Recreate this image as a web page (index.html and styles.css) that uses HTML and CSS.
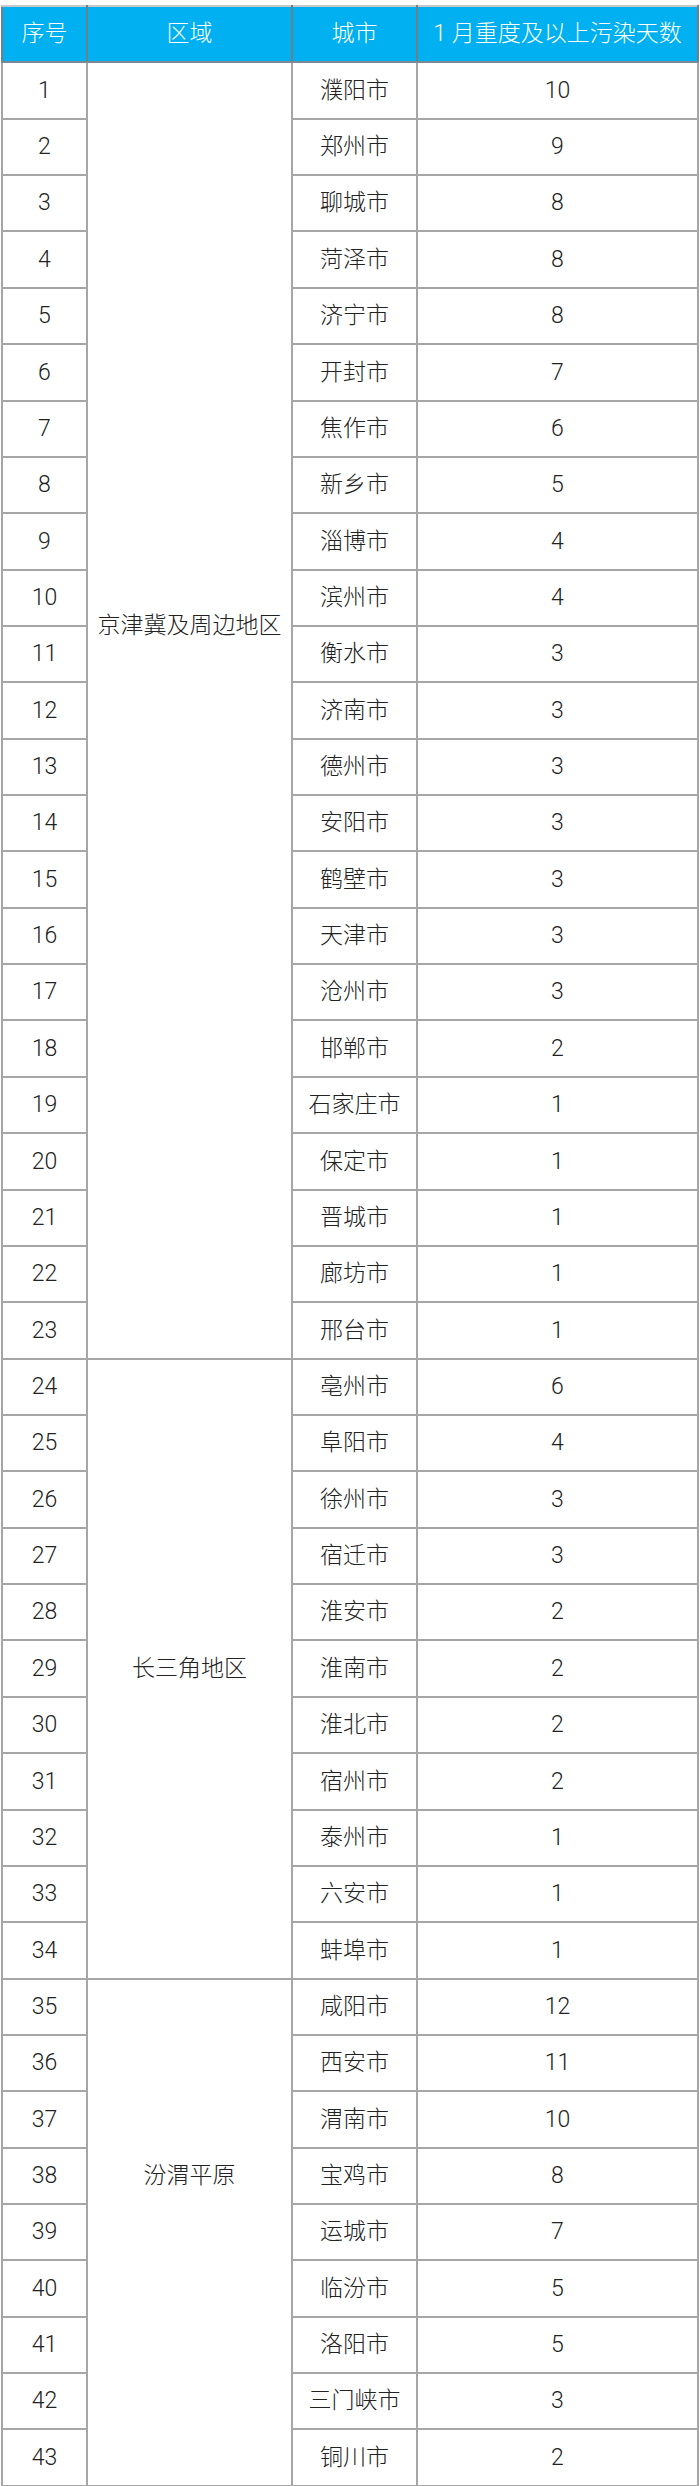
FILE: index.html
```html
<!DOCTYPE html>
<html lang="zh-CN">
<head>
<meta charset="utf-8">
<title>1月重度及以上污染天数</title>
<link rel="stylesheet" href="styles.css">
</head>
<body>
<table class="tbl">
  <colgroup>
    <col class="c-no"><col class="c-region"><col class="c-city"><col class="c-days">
  </colgroup>
  <thead>
    <tr><th>序号</th><th>区域</th><th>城市</th><th>1 月重度及以上污染天数</th></tr>
  </thead>
  <tbody>
    <tr><td>1</td><td rowspan="23" class="region region-a">京津冀及周边地区</td><td>濮阳市</td><td>10</td></tr>
    <tr><td>2</td><td>郑州市</td><td>9</td></tr>
    <tr><td>3</td><td>聊城市</td><td>8</td></tr>
    <tr><td>4</td><td>菏泽市</td><td>8</td></tr>
    <tr><td>5</td><td>济宁市</td><td>8</td></tr>
    <tr><td>6</td><td>开封市</td><td>7</td></tr>
    <tr><td>7</td><td>焦作市</td><td>6</td></tr>
    <tr><td>8</td><td>新乡市</td><td>5</td></tr>
    <tr><td>9</td><td>淄博市</td><td>4</td></tr>
    <tr><td>10</td><td>滨州市</td><td>4</td></tr>
    <tr><td>11</td><td>衡水市</td><td>3</td></tr>
    <tr><td>12</td><td>济南市</td><td>3</td></tr>
    <tr><td>13</td><td>德州市</td><td>3</td></tr>
    <tr><td>14</td><td>安阳市</td><td>3</td></tr>
    <tr><td>15</td><td>鹤壁市</td><td>3</td></tr>
    <tr><td>16</td><td>天津市</td><td>3</td></tr>
    <tr><td>17</td><td>沧州市</td><td>3</td></tr>
    <tr><td>18</td><td>邯郸市</td><td>2</td></tr>
    <tr><td>19</td><td>石家庄市</td><td>1</td></tr>
    <tr><td>20</td><td>保定市</td><td>1</td></tr>
    <tr><td>21</td><td>晋城市</td><td>1</td></tr>
    <tr><td>22</td><td>廊坊市</td><td>1</td></tr>
    <tr><td>23</td><td>邢台市</td><td>1</td></tr>
    <tr><td>24</td><td rowspan="11" class="region">长三角地区</td><td>亳州市</td><td>6</td></tr>
    <tr><td>25</td><td>阜阳市</td><td>4</td></tr>
    <tr><td>26</td><td>徐州市</td><td>3</td></tr>
    <tr><td>27</td><td>宿迁市</td><td>3</td></tr>
    <tr><td>28</td><td>淮安市</td><td>2</td></tr>
    <tr><td>29</td><td>淮南市</td><td>2</td></tr>
    <tr><td>30</td><td>淮北市</td><td>2</td></tr>
    <tr><td>31</td><td>宿州市</td><td>2</td></tr>
    <tr><td>32</td><td>泰州市</td><td>1</td></tr>
    <tr><td>33</td><td>六安市</td><td>1</td></tr>
    <tr><td>34</td><td>蚌埠市</td><td>1</td></tr>
    <tr><td>35</td><td rowspan="9" class="region region-c">汾渭平原</td><td>咸阳市</td><td>12</td></tr>
    <tr><td>36</td><td>西安市</td><td>11</td></tr>
    <tr><td>37</td><td>渭南市</td><td>10</td></tr>
    <tr><td>38</td><td>宝鸡市</td><td>8</td></tr>
    <tr><td>39</td><td>运城市</td><td>7</td></tr>
    <tr><td>40</td><td>临汾市</td><td>5</td></tr>
    <tr><td>41</td><td>洛阳市</td><td>5</td></tr>
    <tr><td>42</td><td>三门峡市</td><td>3</td></tr>
    <tr><td>43</td><td>铜川市</td><td>2</td></tr>
  </tbody>
</table>
</body>
</html>
```

FILE: styles.css
```css
html, body {
  margin: 0;
  padding: 0;
  background: #ffffff;
}

body {
  padding: 5px 0 0 1px;
}

.tbl {
  border-collapse: collapse;
  table-layout: fixed;
  width: 696px;
  font-family: Roboto, "Noto Sans CJK SC", "Noto Sans", sans-serif;
  font-weight: 300;
  font-size: 23px;
  color: #222222;
}

.c-no { width: 85px; }
.c-region { width: 205px; }
.c-city { width: 125px; }
.c-days { width: 281px; }

.tbl tr {
  height: 56.36px;
}

.tbl th,
.tbl td {
  padding: 0;
  text-align: center;
  vertical-align: middle;
  border: 2px solid #a6a6a6;
  line-height: 1.2;
  white-space: nowrap;
}

.tbl th {
  background: #00b0f0;
  color: #ffffff;
  font-weight: 300;
  border-color: #6f7f88;
  border-top-color: #c8c8c8;
  border-bottom-color: #7a8a94;
}

.tbl td.region-a {
  padding-bottom: 169px;
}

.tbl td.region-c {
  padding-bottom: 113px;
}
```
